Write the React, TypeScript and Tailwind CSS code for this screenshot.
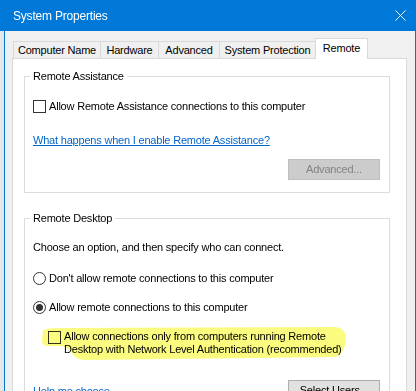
import { ReactNode } from 'react';

const tabs = [
  { label: 'Computer Name', width: 'w-[87px]' },
  { label: 'Hardware', width: 'w-[58px]' },
  { label: 'Advanced', width: 'w-[61px]' },
  { label: 'System Protection', width: 'w-[96px]' },
];

function CheckBox() {
  return <span className="block h-[13px] w-[13px] shrink-0 border border-[#333333] bg-white" />;
}

function Radio({ checked }: { checked?: boolean }) {
  return (
    <span className="flex h-[13px] w-[13px] shrink-0 items-center justify-center rounded-full border border-[#333333] bg-white">
      {checked && <span className="block h-[7px] w-[7px] rounded-full bg-[#333333]" />}
    </span>
  );
}

function GroupBox({ title, className, children }: { title: string; className?: string; children: ReactNode }) {
  return (
    <div className={`border border-[#dcdcdc] pl-[8px] pr-[9px] pb-[12px] ${className ?? ''}`}>
      <div className="-mt-[9px] -ml-[3px] w-fit bg-white px-[3px] leading-[16px]">{title}</div>
      {children}
    </div>
  );
}

export default function App() {
  return (
    <div className="relative h-[391px] w-[416px] overflow-hidden whitespace-nowrap bg-[#f0f0f0] font-['Liberation_Sans',Arial,sans-serif] text-[11px] tracking-[-0.2px] text-black">
      {/* Title bar */}
      <div className="flex h-[31px] items-center justify-between bg-[#0078d7] pl-[13px] pr-[10px] text-white">
        <span className="text-[12px] leading-[16px]">System Properties</span>
        <svg width="11" height="11" viewBox="0 0 11 11" fill="none" stroke="white" strokeWidth="1">
          <path d="M0.5 0.5 L10.5 10.5 M10.5 0.5 L0.5 10.5" />
        </svg>
      </div>

      <div className="flex h-[360px]">
        {/* desktop behind the window */}
        <div className="w-[4px] bg-[#e6e6e6]" />

        <div className="flex w-[412px] flex-col border-x border-[#0078d7] pl-[7px] pr-[8px] pt-[7px]">
          {/* Tabs */}
          <div className="relative z-10 -mb-px flex h-[21px] items-end pl-[1px]">
            {tabs.map((tab) => (
              <div
                key={tab.label}
                className={`mb-px flex h-[17px] items-center justify-center border-l border-t border-[#d9d9d9] bg-[#f0f0f0] leading-[16px] ${tab.width}`}
              >
                {tab.label}
              </div>
            ))}
            <div className="flex h-[21px] w-[53px] items-start justify-center border-x border-t border-[#d9d9d9] bg-white pt-[1px] leading-[16px]">
              Remote
            </div>
          </div>

          {/* Tab page */}
          <div className="h-[380px] shrink-0 border border-[#d9d9d9] bg-white pl-[11px] pr-[16px] pt-[17px]">
            <GroupBox title="Remote Assistance">
              <div className="mt-[14px] flex h-[16px] items-center gap-[3px]">
                <CheckBox />
                <span>Allow Remote Assistance connections to this computer</span>
              </div>
              <a className="mt-[18px] block w-fit leading-[16px] text-[#0066cc] underline">
                What happens when I enable Remote Assistance?
              </a>
              <div className="mt-[11px] flex justify-end">
                <button className="h-[21px] w-[92px] border border-[#bfbfbf] bg-[#cccccc] text-[#838383]">
                  Advanced...
                </button>
              </div>
            </GroupBox>

            <GroupBox title="Remote Desktop" className="mt-[25px]">
              <div className="mt-[13px] leading-[16px]">Choose an option, and then specify who can connect.</div>
              <div className="mt-[15px] flex h-[16px] items-center gap-[3px]">
                <Radio />
                <span>Don&apos;t allow remote connections to this computer</span>
              </div>
              <div className="mt-[13px] flex h-[16px] items-center gap-[3px]">
                <Radio checked />
                <span>Allow remote connections to this computer</span>
              </div>
              <div className="mt-[15px] flex items-start gap-[3px] pl-[15px]">
                <span className="mt-[1px]">
                  <CheckBox />
                </span>
                <span className="leading-[13px]">
                  Allow connections only from computers running Remote
                  <br />
                  Desktop with Network Level Authentication (recommended)
                </span>
              </div>
              <div className="mt-[24px] flex h-[21px] items-center justify-between">
                <a className="leading-[16px] text-[#0066cc] underline">Help me choose</a>
                <button className="h-[21px] w-[92px] border border-[#adadad] bg-[#e1e1e1]">Select Users...</button>
              </div>
            </GroupBox>
          </div>
        </div>
      </div>

      {/* highlighter mark */}
      <svg
        className="pointer-events-none absolute left-0 top-0 mix-blend-multiply"
        width="416"
        height="391"
        viewBox="0 0 416 391"
      >
        <path
          d="M43 331 Q44 328 60 328 L335 327 Q346 328 346 338 Q346 352 336 357 L85 360 Q76 360 72 353 Q68 347 60 346 L46 346 Q42 345 42 340 Z"
          fill="#fbfb7f"
        />
      </svg>
    </div>
  );
}
